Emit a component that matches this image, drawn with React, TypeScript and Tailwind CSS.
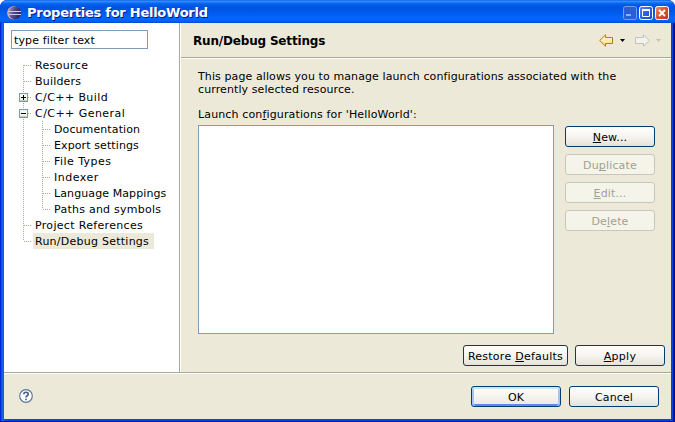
import React from "react";

type Item = { label: string; level: 0 | 1; toggle?: "+" | "-"; selected?: boolean; track: string };

const items: Item[] = [
  { label: "Resource", level: 0, track: "tracking-[0.35px]" },
  { label: "Builders", level: 0, track: "tracking-[0.2px]" },
  { label: "C/C++ Build", level: 0, toggle: "+", track: "tracking-[0.4px]" },
  { label: "C/C++ General", level: 0, toggle: "-", track: "tracking-[0.45px]" },
  { label: "Documentation", level: 1, track: "tracking-[0.1px]" },
  { label: "Export settings", level: 1, track: "tracking-[0.1px]" },
  { label: "File Types", level: 1, track: "tracking-[0.45px]" },
  { label: "Indexer", level: 1, track: "tracking-[0.5px]" },
  { label: "Language Mappings", level: 1, track: "tracking-[0.1px]" },
  { label: "Paths and symbols", level: 1, track: "tracking-[0.25px]" },
  { label: "Project References", level: 0, track: "tracking-[0.32px]" },
  { label: "Run/Debug Settings", level: 0, selected: true, track: "tracking-[0.25px]" },
];

function Branch({ item, index }: { item: Item; index: number }) {
  const last = index === items.length - 1;
  const dots = { stroke: "#aca899", strokeWidth: 1, strokeDasharray: "1 1" };
  return (
    <svg width={item.level ? 47 : 28} height="16" className="shrink-0" shapeRendering="crispEdges">
      <path d={`M19.5 ${index === 0 ? 8 : 0}V${last ? 8 : 16}`} {...dots} />
      {item.level === 0 && <path d="M20 8.5H28" {...dots} />}
      {item.level === 1 && <path d={`M38.5 0V${index === 9 ? 8 : 16}M39 8.5H47`} {...dots} />}
      {item.toggle && (
        <g>
          <rect x="15.5" y="4.5" width="8" height="8" fill="#f6f4ee" stroke="#7898b5" />
          <path d="M16 11.5H23" stroke="#d0cabb" />
          <path d="M17 8.5H22" stroke="#000" />
          {item.toggle === "+" && <path d="M19.5 6V11" stroke="#000" />}
        </g>
      )}
    </svg>
  );
}

function Key({ children }: { children: React.ReactNode }) {
  return <span className="underline decoration-1 underline-offset-1 [text-decoration-skip-ink:none]">{children}</span>;
}

function Button({ children, width, kind = "normal" }: { children: React.ReactNode; width: string; kind?: "normal" | "disabled" | "default" }) {
  const look = {
    normal: "border-[#003c74] bg-linear-to-b from-white via-[#f5f4ef] to-[#e5e2d8] text-black",
    disabled: "border-[#c9c7ba] bg-[#f5f4ea] text-[#a1a192]",
    default: "border-[#003c74] bg-linear-to-b from-white via-[#f5f4ef] to-[#e8e6df] text-black shadow-[inset_0_2px_0_#cee7ff,inset_2px_0_0_#aac4ee,inset_-2px_0_0_#aac4ee,inset_0_-2px_0_#6982ee]",
  }[kind];
  return (
    <button className={`flex h-[21px] shrink-0 items-center justify-center rounded-[3px] border pt-[2px] leading-[13px] tracking-[0.15px] whitespace-pre ${width} ${look}`}>
      <span className="block h-[13px]">{children}</span>
    </button>
  );
}

function EclipseLogo() {
  return (
    <svg width="16" height="14" viewBox="0 0 16 14">
      <defs>
        <linearGradient id="ball" x1="0" x2="1" y2=".3"><stop stopColor="#b5a4bd" /><stop offset=".45" stopColor="#5a5095" /><stop offset="1" stopColor="#2b2560" /></linearGradient>
      </defs>
      <circle cx="6.6" cy="6.8" r="6.5" fill="#dcb49c" />
      <circle cx="7.8" cy="6.8" r="6.4" fill="url(#ball)" />
      <path d="M1.5 5.5H14M1.5 8.5H14" stroke="#c9cdef" strokeWidth="1" />
    </svg>
  );
}

function CaptionButtons() {
  return (
    <svg width="46" height="14" viewBox="0 0 46 14">
      <defs>
        <linearGradient id="blue" x1="0" y1="0" x2="1" y2="1"><stop stopColor="#5b8aee" /><stop offset=".5" stopColor="#2b62dc" /><stop offset="1" stopColor="#1747bd" /></linearGradient>
        <linearGradient id="red" x1="0" y1="0" x2="1" y2="1"><stop stopColor="#ee9372" /><stop offset=".45" stopColor="#df5530" /><stop offset="1" stopColor="#bd3518" /></linearGradient>
      </defs>
      <rect x=".5" y=".5" width="13" height="13" rx="2" fill="#285fd6" stroke="#799ceb" />
      <path d="M3 9H8" stroke="#93b0ec" strokeWidth="2" />
      <rect x="16.5" y=".5" width="13" height="13" rx="2" fill="url(#blue)" stroke="#fff" />
      <path d="M19.5 4V10.5H26.5V4" fill="none" stroke="#fff" /><path d="M19 4H27" stroke="#fff" strokeWidth="2" />
      <rect x="32.5" y=".5" width="13" height="13" rx="2" fill="url(#red)" stroke="#fff" />
      <path d="M36 4L42 10M42 4L36 10" stroke="#fff" strokeWidth="2" />
    </svg>
  );
}

function NavArrows() {
  return (
    <svg width="64" height="14" viewBox="0 0 64 14" className="mt-[2px]">
      <defs>
        <linearGradient id="gold" x1="0" y1="0" x2="0" y2="1"><stop stopColor="#fffbe0" /><stop offset="1" stopColor="#f8dd85" /></linearGradient>
      </defs>
      <path d="M.7 6.5L6.5 .8V3.5H13.5V9.5H6.5V12.2Z" fill="url(#gold)" stroke="#b67c12" />
      <path d="M21 5H26L23.5 8Z" fill="#000" />
      <path d="M50.3 6.5L44.5 .8V3.5H36.5V9.5H44.5V12.2Z" fill="#f3f2ed" stroke="#c3c1bb" />
      <path d="M57 5H62L59.5 8Z" fill="#c3c1bb" />
    </svg>
  );
}

export default function App() {
  return (
    <div className="flex h-[422px] w-[675px] flex-col overflow-hidden rounded-t-[7px] bg-[#001ea0] font-['DejaVu_Sans',sans-serif] text-[11px] leading-[13px] text-black">
      <header className="flex h-[23px] shrink-0 items-center bg-[linear-gradient(to_bottom,#0050d8_0px,#3d95ff_1px,#2080ff_2px,#0060ed_4px,#0053e1_7px,#0055e5_10px,#0066ff_18px,#0062f8_21px,#0049cc_23px)] pt-[3px] pr-[6px] pl-[7px]">
        <EclipseLogo />
        <h1 className="ml-1 flex-1 text-[13px] leading-[16px] font-bold tracking-[-0.26px] text-white [text-shadow:1px_1px_0_#0a1883]">Properties for HelloWorld</h1>
        <CaptionButtons />
      </header>
      <div className="flex min-h-0 flex-1 flex-col bg-[linear-gradient(to_right,#0019cf_0px,#0831d9_1px,#166aee_2px,#0855dd_4px,#0844e4_10px,#0844e4_673px,#001590_673px)] px-1 pb-[3px] shadow-[inset_0_-1px_0_#001590]">
        <div className="flex min-h-0 flex-1 flex-col bg-[#ece9d8]">
          <div className="flex h-[349px] shrink-0">
            <aside className="w-[176px] shrink-0 border-r border-[#aca899] bg-white pt-[7px]">
              <input className="ml-[7px] block h-[19px] w-[137px] border border-[#7f9db9] px-[2px] pt-px tracking-[0.13px] outline-none" defaultValue="type filter text" />
              <div className="mt-2 flex flex-col">
                {items.map((item, i) => (
                  <div key={item.label} className="flex h-4">
                    <Branch item={item} index={i} />
                    <span className={`ml-[1px] h-4 pt-px pl-[2px] leading-[16px] whitespace-nowrap ${item.selected ? "w-[121px] bg-[#ece9d8]" : ""} ${item.track}`}>{item.label}</span>
                  </div>
                ))}
              </div>
            </aside>
            <main className="flex min-w-0 flex-1 flex-col border-l border-white">
              <div className="flex h-[35px] shrink-0 items-center justify-between border-b border-[#aca899] pr-[8px] pl-[12px]">
                <h2 className="pt-[2px] text-[12px] font-bold tracking-[-0.18px]">Run/Debug Settings</h2>
                <NavArrows />
              </div>
              <div className="flex flex-1 flex-col border-t border-white pt-[11px] pl-[17px]">
                <p className="tracking-[0.1px] whitespace-nowrap">This page allows you to manage launch configurations associated with the<br />currently selected resource.</p>
                <p className="mt-3 tracking-[0.14px]">Launch con<Key>f</Key>igurations for 'HelloWorld':</p>
                <div className="mt-1 flex gap-[11px]">
                  <div className="h-[209px] w-[356px] border border-[#7f9db9] bg-white" />
                  <div className="flex flex-col gap-[7px] pt-[1px]">
                    <Button width="w-[90px]"><Key>N</Key>ew...</Button>
                    <Button width="w-[90px]" kind="disabled">Du<Key>p</Key>licate</Button>
                    <Button width="w-[90px]" kind="disabled"><Key>E</Key>dit...</Button>
                    <Button width="w-[90px]" kind="disabled">De<Key>l</Key>ete</Button>
                  </div>
                </div>
                <div className="mt-[11px] flex justify-end gap-[7px] pr-[6px]">
                  <Button width="w-[105px]"><span className="tracking-[0.25px]">Restore <Key>D</Key>efaults</span></Button>
                  <Button width="w-[90px]"><span className="tracking-[0.3px]"><Key>A</Key>pply</span></Button>
                </div>
              </div>
            </main>
          </div>
          <footer className="flex flex-1 items-center border-t border-[#aca899] pr-[12px] pl-[15px] shadow-[inset_0_1px_0_#fff]">
            <svg width="14" height="14" viewBox="0 0 14 14">
              <circle cx="7" cy="7" r="6.3" fill="#fff" stroke="#5f779d" strokeWidth="1.2" />
              <path d="M4.8 5.2C4.8 2.6 9.2 2.6 9.2 5.2C9.2 6.8 7 6.7 7 8.5M7 9.7V11.2" fill="none" stroke="#425f8c" strokeWidth="1.7" />
            </svg>
            <div className="ml-auto flex gap-2">
              <Button width="w-[90px]" kind="default">OK</Button>
              <Button width="w-[90px]">Cancel</Button>
            </div>
          </footer>
        </div>
      </div>
    </div>
  );
}
